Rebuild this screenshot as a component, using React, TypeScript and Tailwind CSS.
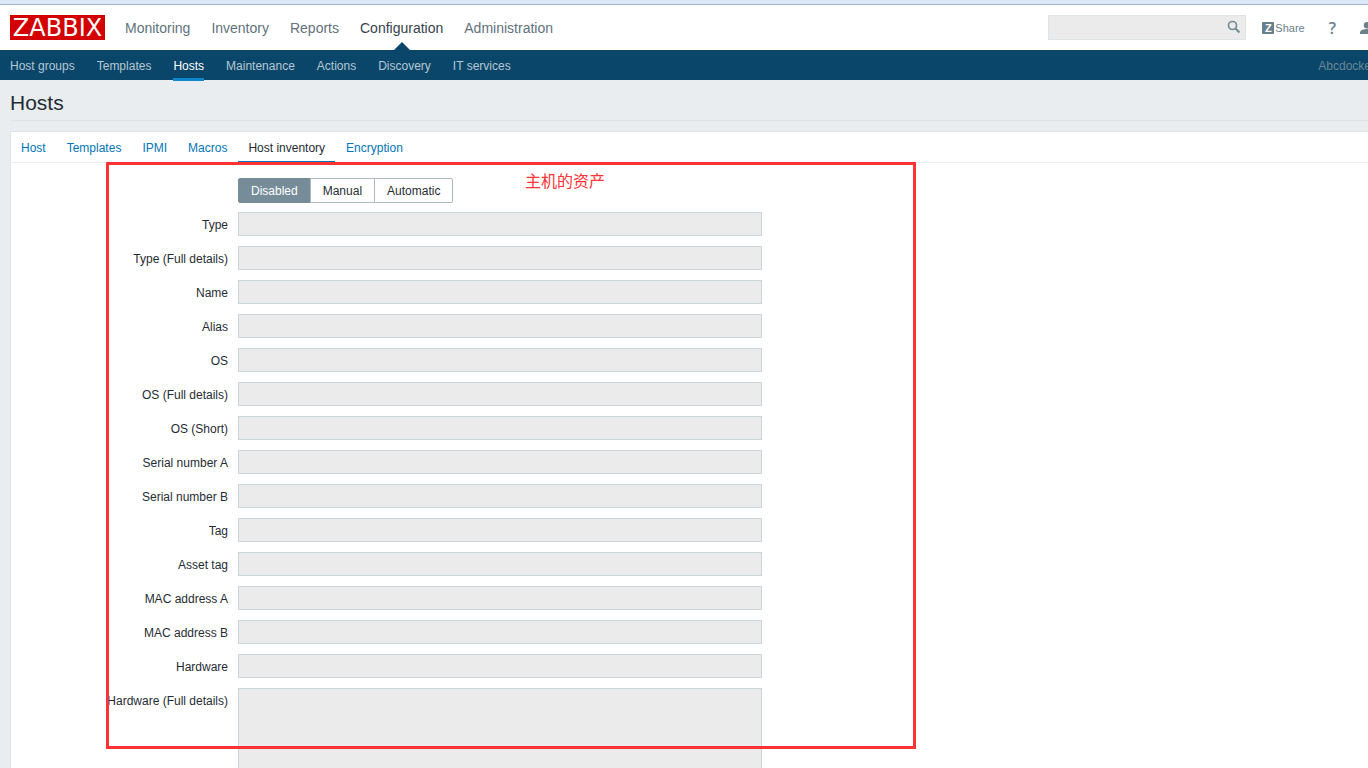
import React from 'react';
import { clsx } from 'clsx';

const mainMenu = ['Monitoring', 'Inventory', 'Reports', 'Configuration', 'Administration'];

const subMenu = ['Host groups', 'Templates', 'Hosts', 'Maintenance', 'Actions', 'Discovery', 'IT services'];

const tabs = ['Host', 'Templates', 'IPMI', 'Macros', 'Host inventory', 'Encryption'];

const modes = ['Disabled', 'Manual', 'Automatic'];

const fields = [
  'Type',
  'Type (Full details)',
  'Name',
  'Alias',
  'OS',
  'OS (Full details)',
  'OS (Short)',
  'Serial number A',
  'Serial number B',
  'Tag',
  'Asset tag',
  'MAC address A',
  'MAC address B',
  'Hardware',
];

function Header() {
  return (
    <header className="flex h-[45px] items-center justify-between bg-white pl-[10px] text-[#768d99]">
      <div className="flex items-center">
        <a
          href="#home"
          className="flex h-[25px] w-[95px] items-start justify-center bg-[#d40000] font-['DejaVu_Sans',sans-serif] text-[24px] leading-[27px] text-white"
        >
          ZABBIX
        </a>
        <nav className="ml-5 flex gap-[21px] text-[14px] leading-[47px]">
          {mainMenu.map((item) => (
            <a
              key={item}
              href="#menu"
              className={clsx('relative h-[45px]', item === 'Configuration' ? 'text-[#36434d]' : 'text-[#5f727d]')}
            >
              {item}
              {item === 'Configuration' && (
                <svg
                  className="absolute bottom-0 left-1/2 -translate-x-1/2"
                  width="16"
                  height="8"
                  viewBox="0 0 16 8"
                  aria-hidden="true"
                >
                  <path d="M0 8 8 0l8 8z" fill="#0a466a" />
                </svg>
              )}
            </a>
          ))}
        </nav>
      </div>
      <div className="-mr-2 flex shrink-0 items-center">
        <form className="relative flex">
          <input
            type="text"
            aria-label="Search"
            className="h-[25px] w-[198px] border border-[#dfe4e7] bg-[#ebebeb] px-2 text-[12px] outline-none"
          />
          <button type="button" aria-label="Search" className="absolute right-[5px] top-[5px]">
            <svg width="14" height="14" viewBox="0 0 14 14" fill="none" stroke="#768d99" aria-hidden="true">
              <circle cx="5.5" cy="5.5" r="4" strokeWidth="1.7" />
              <path d="m8.5 8.5 4 4" strokeWidth="2.2" />
            </svg>
          </button>
        </form>
        <a href="#share" className="ml-4 flex items-center gap-px text-[11px] leading-3 text-[#69808d]">
          <span className="flex size-3 items-center justify-center rounded-[1px] bg-[#69808d] text-[11px] font-bold text-white">
            Z
          </span>
          <span>Share</span>
        </a>
        <a href="#help" className="ml-6 font-['Open_Sans',sans-serif] text-[16px] font-semibold leading-5 text-[#69808d]">
          ?
        </a>
        <a href="#profile" aria-label="Profile" className="ml-6">
          <svg width="16" height="12" viewBox="0 0 16 12" fill="#69808d" aria-hidden="true">
            <circle cx="7" cy="3.200" r="3.200" />
            <path d="M0 12v-1.500c0-2.500 4-3.500 8-3.500s8 1 8 3.500V12z" />
          </svg>
        </a>
      </div>
    </header>
  );
}

function SubNavigation() {
  return (
    <nav className="flex h-[30px] justify-between bg-[#0a466a] pl-[10px] text-[12px] leading-8 text-[#b5c8d3]">
      <div className="flex gap-[22px]">
        {subMenu.map((item) => (
          <a
            key={item}
            href="#section"
            className={clsx('h-[31px]', item === 'Hosts' && 'border-b-[3px] border-[#0f87cc] text-white')}
          >
            {item}
          </a>
        ))}
      </div>
      <span className="-mr-[7px] text-[#6b8797]">Abcdocker</span>
    </nav>
  );
}

function Tabs() {
  return (
    <div role="tablist" className="flex h-[31px] gap-px border-b border-[#ebeef0] text-[12px] leading-8">
      {tabs.map((tab) => (
        <button
          key={tab}
          type="button"
          role="tab"
          aria-selected={tab === 'Host inventory'}
          className={clsx(
            'flex h-[31px] items-start px-[10px]',
            tab === 'Host inventory' ? 'border-b-2 border-[#0275b8] text-[#1f2c33]' : 'text-[#0275b8]',
          )}
        >
          {tab}
        </button>
      ))}
    </div>
  );
}

function InventoryForm() {
  return (
    <form className="grid grid-cols-[217px_524px] gap-x-[10px] gap-y-[10px] pt-[15px] text-[12px] text-[#1f2c33]">
      <div role="group" aria-label="Inventory mode" className="col-start-2 -mb-px flex h-[25px]">
        {modes.map((mode) => (
          <button
            key={mode}
            type="button"
            aria-pressed={mode === 'Disabled'}
            className={clsx(
              '-mr-px flex items-start border px-3 leading-6 first:rounded-l-[2px] last:rounded-r-[2px]',
              mode === 'Disabled' ? 'border-[#768d99] bg-[#768d99] text-white' : 'border-[#acbbc2] bg-white',
            )}
          >
            {mode}
          </button>
        ))}
      </div>
      {fields.map((field) => (
        <React.Fragment key={field}>
          <label htmlFor={field} className="h-6 text-right leading-[26px]">
            {field}
          </label>
          <input id={field} type="text" disabled className="h-6 w-full border border-[#ccd5d9] bg-[#ebebeb] px-1" />
        </React.Fragment>
      ))}
      <label htmlFor="hardware-full" className="h-6 whitespace-nowrap text-right leading-[26px]">
        Hardware (Full details)
      </label>
      <textarea
        id="hardware-full"
        disabled
        className="h-[100px] w-full resize-none border border-[#ccd5d9] bg-[#ebebeb] p-1"
      />
    </form>
  );
}

export default function App() {
  return (
    <div className="min-h-screen overflow-x-clip bg-[#e9edf0] font-['Liberation_Sans',Arial,'Noto_Sans_CJK_SC',sans-serif]">
      <div className="h-[5px] border-b border-[#a0b4cc] bg-[#dbe8f8]" />
      <Header />
      <SubNavigation />
      <main className="pl-[10px]">
        <h1 className="h-[41px] border-b border-[#dfe4e7] text-[21px] leading-[46px] text-[#1f2c33]">Hosts</h1>
        <section className="relative mt-[10px] border-l border-t border-[#dfe4e7] bg-white">
          <Tabs />
          <InventoryForm />
          <div className="pointer-events-none absolute left-[95px] top-[30px] h-[587px] w-[810px] border-[3px] border-[#ff3333] pl-[416px] pt-[3px] font-['Noto_Sans_CJK_SC',sans-serif] text-[16px] leading-6 text-[#ff3333]">
            主机的资产
          </div>
        </section>
      </main>
    </div>
  );
}
